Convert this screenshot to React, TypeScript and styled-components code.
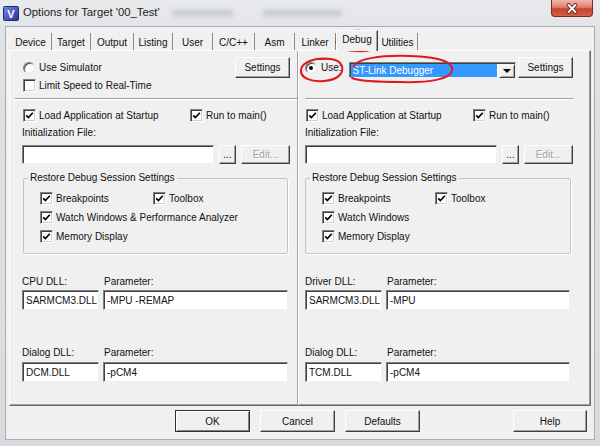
import React from "react";
import styled, { createGlobalStyle, css } from "styled-components";

const GlobalStyle = createGlobalStyle`
  html, body { margin: 0; padding: 0; }
  body {
    background: #dadde1;
    font-family: "Liberation Sans", Arial, sans-serif;
    font-size: 10px;
    color: #111;
  }
`;

const Window = styled.div`
  position: relative;
  width: 600px;
  height: 446px;
  overflow: hidden;
  display: flex;
  flex-direction: column;
  background: linear-gradient(180deg, #e8eaec 0%, #dfe2e5 10%, #d9dcdf 100%);
`;

const TitleBar = styled.div`
  height: 26px;
  flex-shrink: 0;
  display: flex;
  align-items: flex-start;
  padding-left: 3px;
`;

const AppIcon = styled.svg`
  margin-top: 6px;
  flex-shrink: 0;
`;

const Title = styled.span`
  margin-left: 4px;
  margin-top: 6px;
  font-size: 11.3px;
  color: #1c1c1c;
  white-space: nowrap;
`;

const Smudge = styled.span<{ $w: number; $ml: number }>`
  margin-left: ${(p) => p.$ml}px;
  margin-top: 10px;
  width: ${(p) => p.$w}px;
  height: 6px;
  border-radius: 3px;
  background: #b0b4b8;
  filter: blur(2.5px);
  opacity: 0.6;
`;

const CloseButton = styled.div`
  margin-left: auto;
  margin-right: 7px;
  width: 42px;
  height: 17px;
  box-sizing: border-box;
  border: 1px solid #7a2a1e;
  border-top: none;
  border-radius: 0 0 4px 4px;
  background: linear-gradient(180deg, #efb6aa 0%, #df806e 45%, #c8432c 55%, #d4604a 100%);
  display: flex;
  align-items: center;
  justify-content: center;
`;

const Client = styled.div`
  flex: 1;
  margin: 0 5px 6px 5px;
  background: #f0f0f0;
  border: 1px solid #a9acb0;
  display: flex;
  flex-direction: column;
`;

const TabStrip = styled.div`
  height: 23px;
  flex-shrink: 0;
  display: flex;
  align-items: flex-end;
  padding-left: 4px;
`;

const Tab = styled.div<{ $w: number; $active?: boolean }>`
  width: ${(p) => p.$w}px;
  box-sizing: border-box;
  height: 17px;
  padding-top: 2px;
  line-height: 15px;
  text-align: center;
  white-space: nowrap;
  border-right: 1px solid #8a8a8a;
  ${(p) =>
    p.$active &&
    css`
      position: relative;
      z-index: 1;
      height: 21px;
      padding-top: 1px;
      margin-bottom: -1px;
      background: #f0f0f0;
      border-top: 1px solid #fff;
      border-left: 1px solid #fff;
      border-right: 1px solid #404040;
      box-shadow: inset -1px 0 0 #a0a0a0;
    `}
`;

const Page = styled.div`
  margin: 0 3px;
  height: 356px;
  box-sizing: border-box;
  border: 1px solid;
  border-color: #fff #696969 #696969 #fff;
  box-shadow: inset -1px -1px 0 #a0a0a0;
  display: grid;
  grid-template-columns: 288px 1fr;
`;

const Column = styled.div<{ $pl: number; $pr: number; $divider?: boolean }>`
  display: flex;
  flex-direction: column;
  padding: 0 ${(p) => p.$pr}px 0 ${(p) => p.$pl}px;
  ${(p) =>
    p.$divider &&
    css`
      border-right: 1px solid #a0a0a0;
      box-shadow: 1px 0 0 #fff;
    `}
`;

const TopRow = styled.div`
  margin-top: 6px;
  height: 21px;
  display: flex;
  align-items: center;
`;

const SpeedRow = styled.div`
  height: 15px;
  display: flex;
  align-items: center;
  padding-left: 1px;
`;

const Separator = styled.div<{ $ml: number; $mr: number }>`
  margin: 5px ${(p) => p.$mr}px 0 ${(p) => p.$ml}px;
  border-top: 1px solid #a0a0a0;
  border-bottom: 1px solid #fff;
`;

const CheckRow = styled.div`
  margin-top: 8px;
  height: 14px;
  display: flex;
  align-items: center;
  padding-left: 1px;
`;

const Option = styled.label<{ $w?: number; $span?: boolean }>`
  display: flex;
  align-items: center;
  gap: 3px;
  height: 14px;
  white-space: nowrap;
  ${(p) => p.$w && `width: ${p.$w}px;`}
  ${(p) => p.$span && `grid-column: 1 / span 2;`}
`;

const RadioOption = styled(Option)`
  gap: 4px;
  margin-left: 1px;
`;

const CheckBox = styled.span`
  width: 13px;
  height: 13px;
  box-sizing: border-box;
  flex-shrink: 0;
  border: 1px solid;
  border-color: #808080 #fff #fff #808080;
  box-shadow: inset 1px 1px 0 #404040, inset -1px -1px 0 #d4d0c8;
  background: #fff;
  display: flex;
  align-items: center;
  justify-content: center;
`;

const RadioDot = styled.span<{ $on?: boolean }>`
  width: 12px;
  height: 12px;
  box-sizing: border-box;
  flex-shrink: 0;
  border-radius: 50%;
  background: #fff;
  border: 1px solid;
  border-color: #808080 #e8e8e8 #e8e8e8 #808080;
  box-shadow: inset 1px 1px 0 #505050;
  &::after {
    content: "";
    display: ${(p) => (p.$on ? "block" : "none")};
    width: 4px;
    height: 4px;
    margin: 3px;
    border-radius: 50%;
    background: #000;
  }
`;

const Button = styled.div<{ $w: number; $h?: number; $default?: boolean; $disabled?: boolean }>`
  width: ${(p) => p.$w}px;
  height: ${(p) => p.$h ?? 21}px;
  box-sizing: border-box;
  flex-shrink: 0;
  display: flex;
  align-items: center;
  justify-content: center;
  background: #f0f0f0;
  border: 1px solid;
  border-color: #fff #404040 #404040 #fff;
  box-shadow: inset -1px -1px 0 #a0a0a0;
  color: ${(p) => (p.$disabled ? "#a0a0a0" : "#111")};
  ${(p) => p.$disabled && `text-shadow: 1px 1px 0 #fff;`}
  ${(p) =>
    p.$default &&
    css`
      border-color: #303030;
      box-shadow: inset 1px 1px 0 #fff, inset -1px -1px 0 #808080;
    `}
`;

const PushRight = styled.div`
  margin-left: auto;
`;

const FieldLabel = styled.div<{ $mt: number }>`
  margin-top: ${(p) => p.$mt}px;
  height: 14px;
  line-height: 14px;
  white-space: nowrap;
`;

const FileRow = styled.div`
  margin-top: 5px;
  height: 19px;
  display: flex;
  gap: 5px;
`;

const Field = styled.div<{ $h?: number }>`
  flex: 1;
  min-width: 0;
  height: ${(p) => p.$h ?? 19}px;
  box-sizing: border-box;
  background: #fff;
  border: 1px solid;
  border-color: #808080 #f0f0f0 #f0f0f0 #808080;
  box-shadow: inset 1px 1px 0 #404040;
  padding-left: 3px;
  display: flex;
  align-items: center;
  white-space: nowrap;
  overflow: hidden;
`;

const Combo = styled.div`
  align-self: flex-start;
  margin: 5px 0 0 7px;
  width: 167px;
  height: 16px;
  box-sizing: border-box;
  background: #fff;
  border: 1px solid;
  border-color: #808080 #f0f0f0 #f0f0f0 #808080;
  box-shadow: inset 1px 1px 0 #404040;
  padding: 1px 0 0 1px;
  display: flex;
`;

const ComboValue = styled.div`
  flex: 1;
  height: 13px;
  margin-right: 2px;
  padding-left: 2px;
  line-height: 13px;
  background: #3399ff;
  color: #fff;
  white-space: nowrap;
`;

const ComboArrow = styled.div`
  width: 16px;
  height: 14px;
  box-sizing: border-box;
  background: #f0f0f0;
  border: 1px solid;
  border-color: #f0f0f0 #404040 #404040 #f0f0f0;
  box-shadow: inset 1px 1px 0 #fff, inset -1px -1px 0 #a0a0a0;
  display: flex;
  align-items: center;
  justify-content: center;
  &::after {
    content: "";
    border-left: 4px solid transparent;
    border-right: 4px solid transparent;
    border-top: 4px solid #000;
  }
`;

const GroupBox = styled.fieldset<{ $ml: number }>`
  margin: 7px 2px 0 ${(p) => p.$ml}px;
  padding: 6px 0 10px 4px;
  border: 1px solid #c4c4c4;
  border-radius: 2px;
  box-shadow: 1px 1px 0 #fff;
`;

const Legend = styled.legend`
  padding: 0 2px;
  line-height: 14px;
`;

const GroupBody = styled.div`
  display: grid;
  grid-template-columns: 113px auto;
  row-gap: 5px;
  padding-left: 12px;
`;

const DllGrid = styled.div<{ $mt: number; $mr: number; $h?: number }>`
  margin: ${(p) => p.$mt}px ${(p) => p.$mr}px 0 0;
  display: grid;
  grid-template-columns: 77px 1fr;
  column-gap: 4px;
`;

const GridLabel = styled.div<{ $pl?: number }>`
  height: 14px;
  line-height: 14px;
  padding-left: ${(p) => p.$pl ?? 0}px;
  white-space: nowrap;
`;

const Footer = styled.div`
  display: flex;
  gap: 10px;
  padding: 4px 7px 0 169px;
`;

const Annotations = styled.svg`
  position: absolute;
  left: 0;
  top: 0;
  pointer-events: none;
`;

const Check = () => (
  <svg width="9" height="9" viewBox="0 0 9 9">
    <path d="M1.2 4.3 L3.4 6.6 L7.8 1.8" fill="none" stroke="#000" strokeWidth="1.7" />
  </svg>
);

const CheckOption: React.FC<{ label: string; w?: number; span?: boolean }> = ({ label, w, span }) => (
  <Option $w={w} $span={span}>
    <CheckBox>
      <Check />
    </CheckBox>
    {label}
  </Option>
);

const tabs = [
  { label: "Device", w: 42 },
  { label: "Target", w: 39 },
  { label: "Output", w: 43 },
  { label: "Listing", w: 39 },
  { label: "User", w: 40 },
  { label: "C/C++", w: 42 },
  { label: "Asm", w: 40 },
  { label: "Linker", w: 41 },
  { label: "Debug", w: 42, active: true },
  { label: "Utilities", w: 40 },
];

type SideProps = {
  simulator: boolean;
  watchLabel: string;
  dllLabel: string;
  dll: string;
  dllParam: string;
  dialogDll: string;
};

const SharedBody: React.FC<SideProps & { sepMl: number; sepMr: number; boxMl: number; dllMr: number }> = (p) => (
  <>
    <Separator $ml={p.sepMl} $mr={p.sepMr} />
    <CheckRow>
      <CheckOption label="Load Application at Startup" w={167} />
      <CheckOption label="Run to main()" />
    </CheckRow>
    <FieldLabel $mt={4}>Initialization File:</FieldLabel>
    <FileRow>
      <Field />
      <Button $w={17} $h={19}>...</Button>
      <Button $w={49} $h={19} $disabled>
        Edit...
      </Button>
    </FileRow>
    <GroupBox $ml={p.boxMl}>
      <Legend>Restore Debug Session Settings</Legend>
      <GroupBody>
        <CheckOption label="Breakpoints" />
        <CheckOption label="Toolbox" />
        <CheckOption label={p.watchLabel} span />
        <CheckOption label="Memory Display" span />
      </GroupBody>
    </GroupBox>
    <DllGrid $mt={21} $mr={p.dllMr}>
      <GridLabel>{p.dllLabel}</GridLabel>
      <GridLabel $pl={1}>Parameter:</GridLabel>
    </DllGrid>
    <DllGrid $mt={1} $mr={p.dllMr}>
      <Field $h={20}>{p.dll}</Field>
      <Field $h={20}>{p.dllParam}</Field>
    </DllGrid>
    <DllGrid $mt={36} $mr={p.dllMr}>
      <GridLabel>Dialog DLL:</GridLabel>
      <GridLabel $pl={1}>Parameter:</GridLabel>
    </DllGrid>
    <DllGrid $mt={2} $mr={p.dllMr}>
      <Field $h={20}>{p.dialogDll}</Field>
      <Field $h={20}>-pCM4</Field>
    </DllGrid>
  </>
);

export default function App() {
  return (
    <>
      <GlobalStyle />
      <Window>
        <TitleBar>
          <AppIcon width="16" height="15" viewBox="0 0 16 15">
            <defs>
              <linearGradient id="kg" x1="0" y1="0" x2="1" y2="1">
                <stop offset="0" stopColor="#7486e6" />
                <stop offset="1" stopColor="#26339c" />
              </linearGradient>
            </defs>
            <rect x="0.5" y="0.5" width="15" height="14" rx="1" fill="url(#kg)" stroke="#1d2a78" />
            <text x="8" y="12" fontSize="11" fontWeight="bold" fill="#fff" textAnchor="middle" fontFamily="Liberation Sans">
              V
            </text>
          </AppIcon>
          <Title>Options for Target '00_Test'</Title>
          <Smudge $ml={12} $w={62} />
          <Smudge $ml={28} $w={80} />
          <CloseButton>
            <svg width="14" height="11" viewBox="0 0 14 11">
              <path d="M3.5 2 L10.5 9 M10.5 2 L3.5 9" stroke="#5a1a10" strokeWidth="3.6" strokeLinecap="round" />
              <path d="M3.5 2 L10.5 9 M10.5 2 L3.5 9" stroke="#fff" strokeWidth="2" strokeLinecap="round" />
            </svg>
          </CloseButton>
        </TitleBar>

        <Client>
          <TabStrip>
            {tabs.map((t) => (
              <Tab key={t.label} $w={t.w} $active={t.active}>
                {t.label}
              </Tab>
            ))}
          </TabStrip>

          <Page>
            <Column $pl={12} $pr={7} $divider>
              <TopRow>
                <RadioOption>
                  <RadioDot />
                  Use Simulator
                </RadioOption>
                <PushRight />
                <Button $w={55}>Settings</Button>
              </TopRow>
              <SpeedRow>
                <Option>
                  <CheckBox />
                  Limit Speed to Real-Time
                </Option>
              </SpeedRow>
              <SharedBody
                simulator
                watchLabel="Watch Windows & Performance Analyzer"
                dllLabel="CPU DLL:"
                dll="SARMCM3.DLL"
                dllParam="-MPU -REMAP"
                dialogDll="DCM.DLL"
                sepMl={-7}
                sepMr={-7}
                boxMl={1}
                dllMr={2}
              />
            </Column>

            <Column $pl={7} $pr={17}>
              <TopRow>
                <RadioOption style={{ marginLeft: 0 }}>
                  <RadioDot $on />
                  Use:
                </RadioOption>
                <Combo>
                  <ComboValue>ST-Link Debugger</ComboValue>
                  <ComboArrow />
                </Combo>
                <PushRight />
                <Button $w={55}>Settings</Button>
              </TopRow>
              <SpeedRow />
              <SharedBody
                simulator={false}
                watchLabel="Watch Windows"
                dllLabel="Driver DLL:"
                dll="SARMCM3.DLL"
                dllParam="-MPU"
                dialogDll="TCM.DLL"
                sepMl={0}
                sepMr={-1}
                boxMl={0}
                dllMr={3}
              />
            </Column>
          </Page>

          <Footer>
            <Button $w={75} $h={22} $default>
              OK
            </Button>
            <Button $w={75} $h={22}>
              Cancel
            </Button>
            <Button $w={75} $h={22}>
              Defaults
            </Button>
            <PushRight />
            <Button $w={74} $h={22}>
              Help
            </Button>
          </Footer>
        </Client>

        <Annotations width="600" height="446" viewBox="0 0 600 446">
          <g fill="none" stroke="#e0181c" strokeWidth="2" strokeLinecap="round" strokeLinejoin="round">
            <path d="M339 47 C333 40, 338 32, 352 31 C366 30, 378 32, 377 41 C377 48, 370 52, 357 51 C347 51, 340 49, 336 43" />
            <path d="M331 59 C315 57, 302 62, 301 70 C300 78, 311 82, 324 81 C337 80, 344 74, 342 66 C340 60, 332 58, 321 59" />
            <path d="M354 67 C355 59, 380 55, 410 56 C440 57, 454 62, 452 71 C450 79, 430 83, 400 82 C376 82, 359 81, 352 78" />
          </g>
        </Annotations>
      </Window>
    </>
  );
}
